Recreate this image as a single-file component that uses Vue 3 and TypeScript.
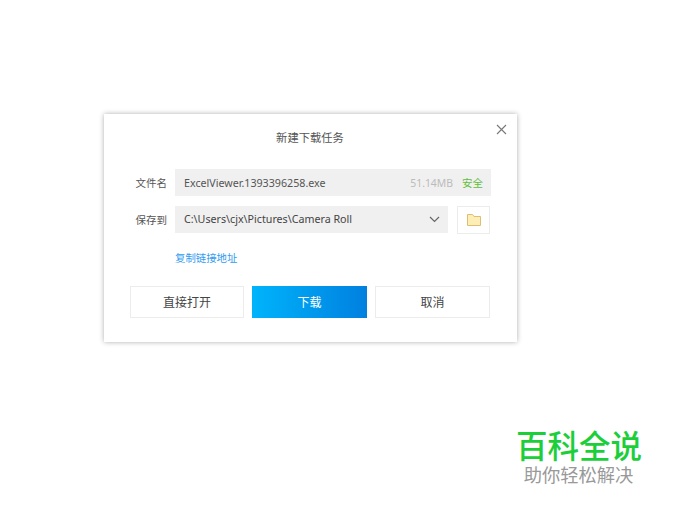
<script setup lang="ts">
const fileName = 'ExcelViewer.1393396258.exe'
const savePath = 'C:\\Users\\cjx\\Pictures\\Camera Roll'
</script>

<template>
  <div class="page">
    <section class="dialog">
      <header class="title">新建下载任务</header>
      <button class="close" aria-label="关闭">
        <svg width="11" height="11" viewBox="0 0 11 11"><path d="M1 1L10 10M10 1L1 10" stroke="#777" stroke-width="1.1" fill="none" /></svg>
      </button>
      <div class="row first">
        <span class="label">文件名</span>
        <div class="field file">
          <span class="name">{{ fileName }}</span>
          <span class="size">51.14MB</span>
          <span class="safe">安全</span>
        </div>
      </div>
      <div class="row second">
        <span class="label">保存到</span>
        <div class="field path">
          <span class="name dark">{{ savePath }}</span>
          <svg width="11" height="7" viewBox="0 0 11 7"><path d="M1 1L5.5 5.5L10 1" stroke="#666" stroke-width="1.2" fill="none" /></svg>
        </div>
        <button class="folder" aria-label="选择文件夹">
          <svg width="14" height="12" viewBox="0 0 14 12"><path d="M.5.5H5.5L7 2.5H13.5V11.5H.5Z" fill="#fdeeb5" stroke="#e0bd75" /></svg>
        </button>
      </div>
      <a class="link">复制链接地址</a>
      <div class="actions">
        <button class="btn">直接打开</button>
        <button class="btn primary">下载</button>
        <button class="btn">取消</button>
      </div>
    </section>
    <div class="mark">
      <div class="mark-title">百科全说</div>
      <div class="mark-sub">助你轻松解决</div>
    </div>
  </div>
</template>

<style scoped>
.page {
  width: 692px;
  height: 519px;
  box-sizing: border-box;
  padding: 114px 0 0 104px;
  overflow: hidden;
  background: #fff;
  font-family: "Noto Sans CJK SC", "Noto Sans", sans-serif;
  color: #555;
}
.dialog {
  position: relative;
  width: 413px;
  height: 228px;
  box-sizing: border-box;
  padding-top: 15px;
  background: #fff;
  box-shadow: 0 0 5px rgba(0, 0, 0, 0.32);
}
.title {
  height: 16px;
  line-height: 16px;
  font-size: 11.3px;
  text-align: center;
  margin-right: 1px;
}
.close {
  position: absolute;
  top: 10px;
  right: 10px;
  width: 11px;
  height: 11px;
  padding: 0;
  border: 0;
  background: none;
  display: flex;
}
.row {
  display: flex;
  align-items: center;
  height: 27px;
}
.first { margin-top: 24px; }
.second { margin-top: 10px; }
.label {
  width: 63px;
  text-align: right;
  font-size: 10.5px;
  line-height: 14px;
  margin-right: 8px;
}
.field {
  height: 27px;
  display: flex;
  align-items: center;
  background: #f0f0f0;
  box-sizing: border-box;
  padding-left: 9px;
  font-family: "Noto Sans", "Noto Sans CJK SC", sans-serif;
  font-size: 10.7px;
  line-height: 14px;
}
.file { width: 316px; padding-right: 8px; }
.path { width: 273px; padding-right: 8px; padding-bottom: 1px; justify-content: space-between; }
.name { color: #555; }
.name.dark { color: #444; }
.size { margin-left: auto; color: #bbb; font-size: 10.4px; }
.safe { margin-left: 9px; color: #62bd3b; font-family: "Noto Sans CJK SC", sans-serif; font-size: 10.5px; }
.folder {
  width: 33px;
  height: 28px;
  margin-left: 9px;
  padding: 0;
  background: #fff;
  border: 1px solid #ececec;
  display: flex;
  align-items: center;
  justify-content: center;
}
.link {
  display: block;
  margin: 18px 0 0 71px;
  height: 14px;
  line-height: 14px;
  font-size: 10.4px;
  color: #2f9bf0;
}
.actions {
  display: grid;
  grid-template-columns: 114px 115px 115px;
  gap: 8px;
  margin: 21px 0 0 26px;
}
.btn {
  height: 32px;
  box-sizing: border-box;
  padding: 0;
  background: #fff;
  border: 1px solid #ececec;
  font-family: inherit;
  font-size: 12px;
  line-height: 16px;
  color: #444;
}
.primary {
  border: 0;
  color: #fff;
  background: linear-gradient(90deg, #00b4fb, #0080e0);
}
.mark {
  margin: 84px 0 0 412px;
  width: 125px;
  text-align: center;
}
.mark-title {
  font-size: 31.5px;
  line-height: 36px;
  font-weight: 500;
  color: #1ccf3a;
  white-space: nowrap;
}
.mark-sub {
  font-size: 18.3px;
  line-height: 24px;
  color: #999;
  white-space: nowrap;
}
</style>

<style>
html, body { margin: 0; background: #fff; }
</style>
